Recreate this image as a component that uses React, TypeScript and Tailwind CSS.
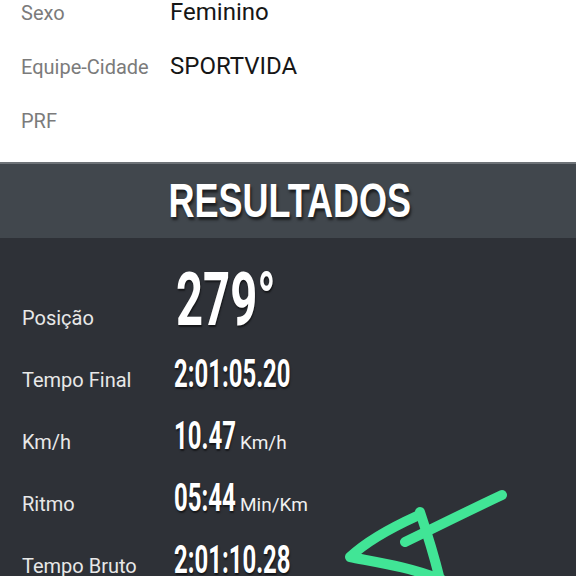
import type { ReactNode } from "react";

type InfoRow = { label: string; value: string };

const info: InfoRow[] = [
  { label: "Sexo", value: "Feminino" },
  { label: "Equipe-Cidade", value: "SPORTVIDA" },
  { label: "PRF", value: "" },
];

function Big({ children, width, scale }: { children: ReactNode; width: string; scale: string }) {
  return (
    <span className={`inline-block whitespace-nowrap ${width}`}>
      <span
        className={`inline-block origin-left font-bold text-white [text-shadow:1px_2px_2px_rgba(0,0,0,0.55)] ${scale}`}
      >
        {children}
      </span>
    </span>
  );
}

function ResultRow({ label, height, children }: { label: string; height: string; children: ReactNode }) {
  return (
    <div className={`flex items-baseline ${height}`}>
      <span className="w-[174px] shrink-0 pl-[22px] text-[20px] leading-none text-[#e8e8e8]">{label}</span>
      <div className="flex items-baseline">{children}</div>
    </div>
  );
}

function Unit({ children }: { children: ReactNode }) {
  return <span className="ml-[5px] text-[19px] leading-none text-[#f0f0f0]">{children}</span>;
}

export default function App() {
  return (
    <div className="relative h-[576px] w-[576px] overflow-hidden bg-white font-['Roboto',sans-serif]">
      {/* athlete info */}
      <section className="flex flex-col">
        {info.map((row) => (
          <div key={row.label} className="flex h-[54px] items-baseline">
            <span className="w-[170px] shrink-0 pl-[21px] text-[20px] leading-none text-[#7b7b7b]">{row.label}</span>
            <span className="text-[24px] leading-none text-[#161616]">{row.value || "\u00a0"}</span>
          </div>
        ))}
      </section>

      {/* results header */}
      <div className="flex h-[76px] items-center justify-center border-t-2 border-[#6e7378] bg-[#41474d]">
        <h1 className="ml-[4px] scale-x-[0.75] font-['Liberation_Sans',sans-serif] text-[48px] font-bold leading-none text-white [text-shadow:2px_3px_3px_rgba(0,0,0,0.6)]">
          RESULTADOS
        </h1>
      </div>

      {/* results */}
      <section className="h-[400px] bg-[#2e3137] pt-[24px]">
        <ResultRow label="Posição" height="h-[93px]">
          <span className="pl-[2px] text-[75px] leading-none">
            <Big width="w-[100px]" scale="scale-x-[0.63]">279°</Big>
          </span>
        </ResultRow>
        <ResultRow label="Tempo Final" height="h-[62px]">
          <span className="text-[38px] leading-none">
            <Big width="w-[118px]" scale="scale-x-[0.63]">2:01:05.20</Big>
          </span>
        </ResultRow>
        <ResultRow label="Km/h" height="h-[62px]">
          <span className="text-[38px] leading-none">
            <Big width="w-[61px]" scale="scale-x-[0.63]">10.47</Big>
          </span>
          <Unit>Km/h</Unit>
        </ResultRow>
        <ResultRow label="Ritmo" height="h-[62px]">
          <span className="text-[38px] leading-none">
            <Big width="w-[61px]" scale="scale-x-[0.63]">05:44</Big>
          </span>
          <Unit>Min/Km</Unit>
        </ResultRow>
        <ResultRow label="Tempo Bruto" height="h-[62px]">
          <span className="text-[38px] leading-none">
            <Big width="w-[118px]" scale="scale-x-[0.63]">2:01:10.28</Big>
          </span>
        </ResultRow>
      </section>

      {/* hand-drawn annotation */}
      <svg
        className="pointer-events-none absolute left-0 top-0"
        width="576"
        height="576"
        viewBox="0 0 576 576"
        fill="none"
        stroke="#41e596"
        strokeWidth="10"
        strokeLinecap="round"
        strokeLinejoin="round"
      >
        <path d="M502 495 C470 510 440 525 405 542" />
        <path d="M417 516 C395 526 368 540 350 557 C375 562 410 567 442 580" />
        <path d="M420 512 C426 530 434 555 440 580" />
      </svg>
    </div>
  );
}
